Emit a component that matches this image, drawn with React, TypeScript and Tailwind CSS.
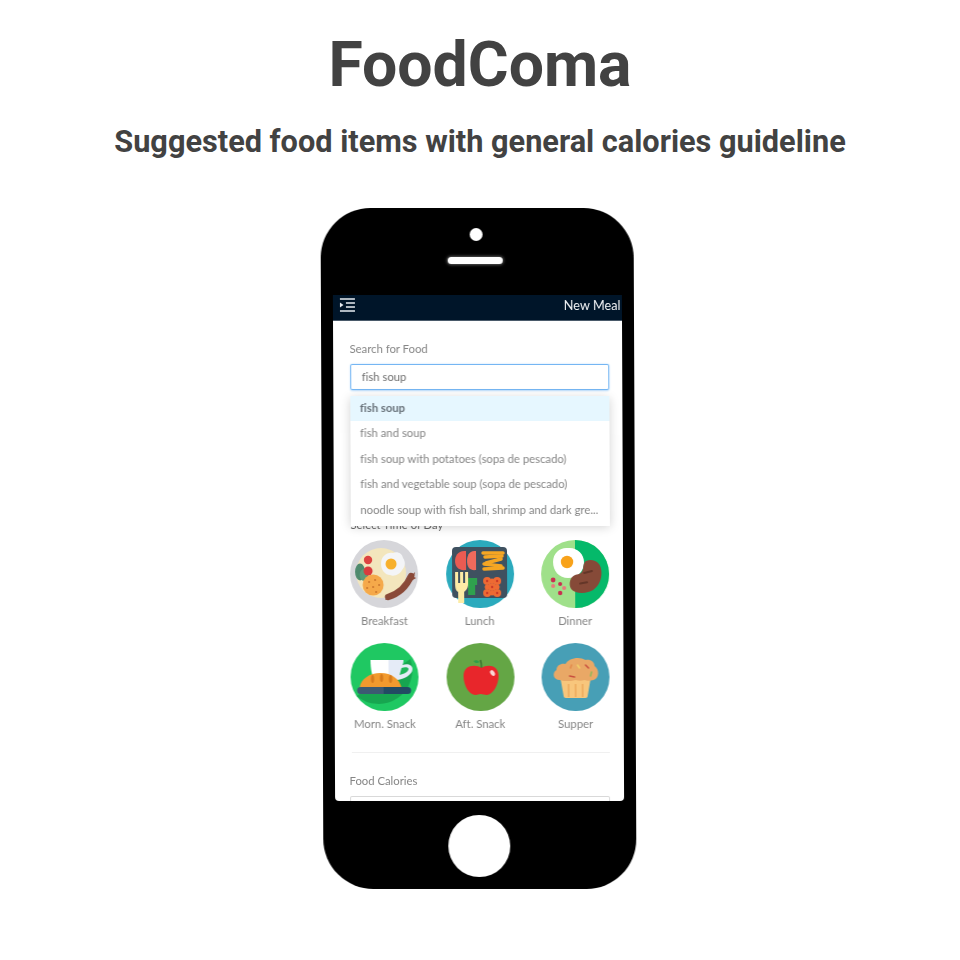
const meals = [
  { label: 'Breakfast', icon: <BreakfastIcon /> },
  { label: 'Lunch', icon: <LunchIcon /> },
  { label: 'Dinner', icon: <DinnerIcon /> },
  { label: 'Morn. Snack', icon: <SnackIcon /> },
  { label: 'Aft. Snack', icon: <AppleIcon /> },
  { label: 'Supper', icon: <MuffinIcon /> },
];

const results = [
  'fish and soup',
  'fish soup with potatoes (sopa de pescado)',
  'fish and vegetable soup (sopa de pescado)',
  'noodle soup with fish ball, shrimp and dark gre...',
];

function BreakfastIcon() {
  return (
    <svg viewBox="0 0 68 68" className="w-[68px] h-[68px]">
      <circle cx="34" cy="34" r="34" fill="#d6d6da" />
      <circle cx="31" cy="33" r="25" fill="#f3e6bd" />
      <path d="M31 24c0-8 6-12 12-11 4-2 9 0 10 5 3 4 2 9-1 12-2 4-8 7-12 5-5 0-9-5-9-11z" fill="#f4f5f7" />
      <circle cx="41" cy="24" r="5.500" fill="#f7b02c" />
      <ellipse cx="10" cy="32" rx="5" ry="8.500" fill="#4f8a6e" />
      <ellipse cx="14" cy="35" rx="4.500" ry="6" fill="#5d9c7a" />
      <circle cx="18" cy="20" r="4.200" fill="#dc4340" />
      <circle cx="18" cy="31" r="4.500" fill="#d83c3d" />
      <circle cx="23" cy="45" r="10.500" fill="#f5a94a" />
      <g fill="#c9752c">
        <circle cx="19" cy="42" r="1" />
        <circle cx="25" cy="40" r="1" />
        <circle cx="29" cy="45" r="1" />
        <circle cx="23" cy="47" r="1" />
        <circle cx="17" cy="48" r="1" />
        <circle cx="26" cy="52" r="1" />
      </g>
      <path d="M38 57Q54 52 61 36" fill="none" stroke="#8a4a39" strokeWidth="6.500" strokeLinecap="round" />
      <path d="M35 60l3-6 4 4zM59 38l6-6-1 5 2 1-5 3z" fill="#8a4a39" />
    </svg>
  );
}

function LunchIcon() {
  return (
    <svg viewBox="0 0 68 68" className="w-[68px] h-[68px]">
      <circle cx="34" cy="34" r="34" fill="#2baabd" />
      <rect x="6" y="7" width="55" height="51" rx="4" fill="#3f5160" />
      <path d="M20 11C12 10 9 16 9 21s3 10 11 9z" fill="#ea5b52" />
      <path d="M30 11c-7-1-9 5-9 10s2 10 9 9z" fill="#ef6a5c" />
      <g fill="none" stroke="#f5a623" strokeWidth="3.500" strokeLinecap="round">
        <path d="M37 13h20" />
        <path d="M39 17l17-1" />
        <path d="M55 19l-15 4" />
        <path d="M38 29l19-1" />
        <path d="M38 24l17 2" />
      </g>
      <path d="M22 38h9v7h-2v10h-7z" fill="#2fa14e" />
      <g fill="#ee6a33">
        <circle cx="41" cy="41" r="4" />
        <circle cx="51" cy="41" r="4" />
        <circle cx="46" cy="47" r="4" />
        <circle cx="41" cy="53" r="4" />
        <circle cx="51" cy="53" r="4" />
        <circle cx="41" cy="47" r="2.500" />
        <circle cx="51" cy="47" r="2.500" />
        <circle cx="46" cy="41" r="2.500" />
        <circle cx="46" cy="53" r="2.500" />
      </g>
      <g fill="#c93a28">
        <circle cx="41" cy="41" r="1.200" />
        <circle cx="51" cy="41" r="1.200" />
        <circle cx="46" cy="47" r="1.200" />
        <circle cx="41" cy="53" r="1.200" />
        <circle cx="51" cy="53" r="1.200" />
      </g>
      <path d="M9 32h3v11h2V32h3v11h2V32h3v12c0 5-3 7-4 8v11h-6V52c-2-1-3-3-3-8z" fill="#fdeca6" />
    </svg>
  );
}

function DinnerIcon() {
  return (
    <svg viewBox="0 0 68 68" className="w-[68px] h-[68px]">
      <circle cx="34" cy="34" r="34" fill="#9fe08a" />
      <path d="M34 0a34 34 0 0 1 0 68z" fill="#05b96a" />
      <path d="M12 22c0-10 8-15 15-14 9-1 16 6 16 14 0 10-7 16-16 16S12 31 12 22z" fill="#ffffff" />
      <circle cx="26" cy="22" r="6.200" fill="#f8a21a" />
      <path d="M45 21c7-3 14 1 15 8 2 9-3 21-13 23-6 2-14 1-17-3-3-5-1-12 4-14 5-1 7-2 8-6 0-3 1-7 3-8z" fill="#864a38" />
      <g fill="#643628">
        <rect x="42" y="31" width="10" height="2" rx="1" transform="rotate(-15 47 32)" />
        <rect x="38" y="42" width="9" height="2" rx="1" transform="rotate(-10 42 43)" />
      </g>
      <g fill="#c92f50">
        <circle cx="12" cy="40" r="2.400" />
        <circle cx="19" cy="44" r="2" />
        <circle cx="19" cy="53" r="2.200" />
      </g>
      <g fill="#e77c7c">
        <circle cx="12" cy="46" r="2" />
        <circle cx="23" cy="48" r="2" />
      </g>
    </svg>
  );
}

function SnackIcon() {
  return (
    <svg viewBox="0 0 68 68" className="w-[68px] h-[68px]">
      <circle cx="34" cy="34" r="34" fill="#1fc862" />
      <path d="M6 53L60 16a34 34 0 0 1-54 37z" fill="#17a650" />
      <path d="M20 17h18v24H25c-3-6-5-14-5-24z" fill="#ffffff" />
      <path d="M38 17h15c0 1 0 3-1 5 5-2 10 0 10 4 0 6-9 10-15 11l-2 4h-7z" fill="#e5ebf7" />
      <path d="M51 25c3-1 7-1 7 1 0 3-5 5-9 6z" fill="#1fb65a" />
      <path d="M9 45c1-9 10-15 21-15 11 0 19 6 21 15z" fill="#f29a2e" />
      <g fill="#d67a1c">
        <ellipse cx="22" cy="36" rx="1.600" ry="4" />
        <ellipse cx="31" cy="35" rx="1.600" ry="4" />
        <ellipse cx="40" cy="36" rx="1.600" ry="4" />
      </g>
      <path d="M10 44h23v7H10a3.500 3.500 0 0 1 0-7z" fill="#3c5a72" />
      <path d="M33 44h24a3.500 3.500 0 0 1 0 7H33z" fill="#224b63" />
    </svg>
  );
}

function AppleIcon() {
  return (
    <svg viewBox="0 0 68 68" className="w-[68px] h-[68px]">
      <circle cx="34" cy="34" r="34" fill="#64a645" />
      <path d="M35 25c0-3 0-5-1-8" fill="none" stroke="#33632a" strokeWidth="1.200" />
      <path d="M33 19c-2-2-4-2-6-1 1 2 4 3 6 1z" fill="#2f9e49" />
      <path d="M35 25c6-4 17-3 17 8 0 9-6 19-12 19-2 0-4-1-6-1-2 0-3 1-5 1-7 0-12-10-12-19 0-11 12-12 18-8z" fill="#e8262b" />
      <ellipse cx="46" cy="30" rx="2" ry="3.200" fill="#fbd5d5" transform="rotate(-35 46 30)" />
    </svg>
  );
}

function MuffinIcon() {
  return (
    <svg viewBox="0 0 68 68" className="w-[68px] h-[68px]">
      <circle cx="34" cy="34" r="34" fill="#479fb6" />
      <path d="M19 36h30l-3 17c0 1-1 2-2 2H24c-1 0-2-1-2-2z" fill="#f8c67c" />
      <g stroke="#eda95b" strokeWidth="1.500">
        <path d="M27 41v13" />
        <path d="M34 41v13" />
        <path d="M41 41v13" />
      </g>
      <path d="M18 37c-6 0-8-7-3-10 0-5 5-7 9-6 3-6 14-8 20-4 5-1 9 2 9 6 5 3 5 12-1 14-3 1-7 1-9 0-3 1-6 1-9 0-3 1-6 1-8 1-3 0-5 0-8-1z" fill="#e9a866" />
      <g fill="none" strokeWidth="1.500" strokeLinecap="round">
        <path d="M28 33l5 1" stroke="#c9503f" />
        <path d="M36 22l2 3" stroke="#f1d16b" />
        <path d="M44 22l3 3" stroke="#c9503f" />
        <path d="M50 29l-1 4" stroke="#8fb75a" />
        <path d="M30 22l-1 3" stroke="#e28a4a" />
      </g>
    </svg>
  );
}

function Hamburger() {
  return (
    <svg viewBox="0 0 15 14" className="w-[15px] h-[14px]" fill="none" stroke="#e8edf2" strokeWidth="1.300">
      <path d="M0 1h15M6 5h9M6 9h9M0 13h15" />
      <path d="M0 4.500l3.500 2.500L0 9.500z" fill="#e8edf2" stroke="none" />
    </svg>
  );
}

export default function App() {
  return (
    <div className="w-[960px] h-[960px] bg-white overflow-hidden flex flex-col items-center text-[#424242] font-['Roboto',sans-serif]">
      <h1 className="mt-[29px] text-[62.500px] leading-[72px] font-bold whitespace-nowrap">FoodComa</h1>
      <h2 className="mt-[23px] text-[30.700px] leading-[36px] font-bold whitespace-nowrap">Suggested food items with general calories guideline</h2>

      <div className="mt-[48px] ml-[-4px] w-[313px] h-[681px] shrink-0 bg-black rounded-[50px] flex flex-col items-center skew-x-[0.25deg] blur-[0.4px]">
        <div className="mt-[20px] ml-[-3px] w-[13px] h-[13px] rounded-full bg-white" />
        <div className="mt-[16px] ml-[-4px] w-[55px] h-[7px] rounded-full bg-white shadow-[0_0_3px_1px_rgba(255,255,255,0.35)]" />
        <div className="mt-[31px] ml-[-1px] w-[289px] h-[506px] rounded-b-[4px] bg-white overflow-hidden flex flex-col font-['Lato',sans-serif] [font-variant-ligatures:none]">
          <div className="h-[26px] shrink-0 bg-[#001529] border-b border-[#4a5a6a] pl-[7px] pr-[1px] pt-[3px] flex items-start justify-between">
            <Hamburger />
            <span className="text-[12.700px] leading-[15px] text-[#f2f4f6]">New Meal</span>
          </div>

          <div className="relative px-[17px] pt-[20px] flex flex-col text-[#858585] text-[11.300px]">
            <label className="leading-[16px]">Search for Food</label>
            <div className="mt-[7px] mr-[-4px] h-[26px] shrink-0 rounded-[2px] border border-[#75b6f3] shadow-[0_0_2px_#b5dafb] pl-[11px] flex items-center text-[#707070]">
              fish soup
            </div>

            <div className="absolute left-[17px] right-[13px] top-[75px] h-[130px] bg-white shadow-[0_2px_10px_rgba(0,0,0,0.18)] flex flex-col z-10">
              <div className="h-[25px] shrink-0 bg-[#e6f7ff] pl-[10px] flex items-center font-bold text-[#68727a]">fish soup</div>
              {results.map((item) => (
                <div key={item} className="h-[25.500px] shrink-0 pl-[10px] flex items-center whitespace-nowrap">
                  {item}
                </div>
              ))}
            </div>

            <label className="mt-[127px] leading-[16px] text-[#666666]">Select Time of Day</label>
            <div className="mt-[7px] mr-[-3px] grid grid-cols-3 gap-x-[28px] gap-y-[14px]">
              {meals.map((meal) => (
                <div key={meal.label} className="flex flex-col items-center">
                  {meal.icon}
                  <span className="mt-[5px] leading-[16px] whitespace-nowrap">{meal.label}</span>
                </div>
              ))}
            </div>

            <div className="mt-[20px] mr-[-3px] border-t border-[#f0f0f0]" />
            <label className="mt-[20px] ml-[-2px] leading-[16px]">Food Calories</label>
            <div className="mt-[7px] ml-[-2px] mr-[-3px] h-[26px] shrink-0 rounded-[2px] border border-[#d9d9d9]" />
          </div>
        </div>
        <div className="mt-[14px] ml-[-1px] w-[62px] h-[62px] rounded-full bg-white" />
      </div>
    </div>
  );
}
